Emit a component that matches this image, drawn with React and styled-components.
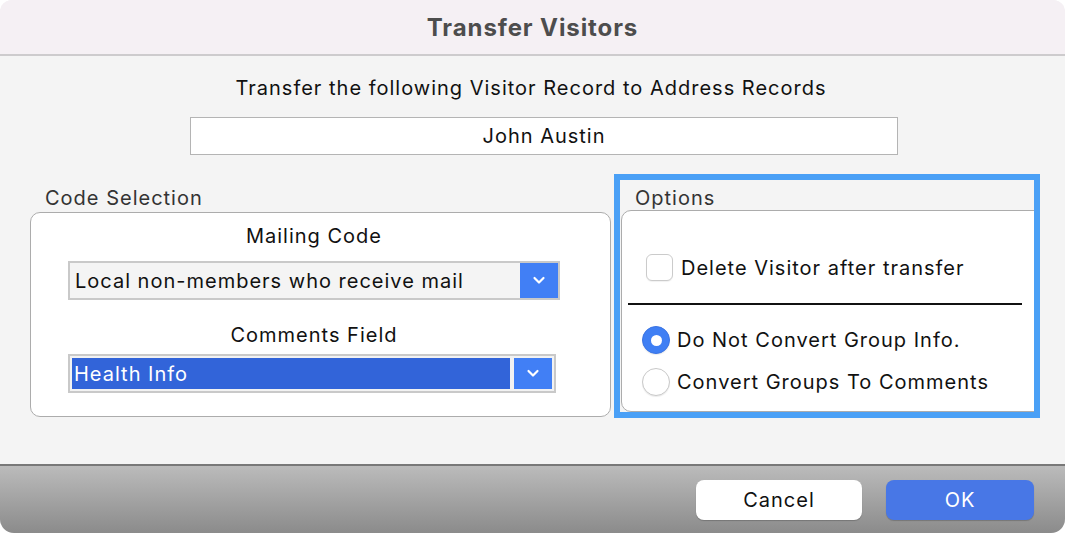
import React from "react";
import styled, { createGlobalStyle } from "styled-components";

const GlobalStyle = createGlobalStyle`
  html, body {
    margin: 0;
    padding: 0;
    background: #ffffff;
  }
  body {
    font-family: "Inter", "Noto Sans", "Liberation Sans", sans-serif;
    color: #111;
    letter-spacing: 1px;
  }
`;

const Chevron = () => (
  <svg width="14" height="9" viewBox="0 0 14 9">
    <path d="M2.5 2 L7 6.5 L11.5 2" fill="none" stroke="#fff" strokeWidth="2.2" strokeLinecap="round" strokeLinejoin="round" />
  </svg>
);

const PopupSelect = ({ value, focused, width }) => (
  <SelectFrame $focused={focused} style={{ width }}>
    <SelectValue $focused={focused}>{value}</SelectValue>
    <SelectButton $focused={focused}>
      <Chevron />
    </SelectButton>
  </SelectFrame>
);

const Radio = ({ checked, label }) => (
  <OptionRow $radio>
    <RadioDot $checked={checked} />
    <OptionText>{label}</OptionText>
  </OptionRow>
);

export default function App() {
  return (
    <>
      <GlobalStyle />
      <Window>
        <TitleBar>
          <Title>Transfer Visitors</Title>
        </TitleBar>

        <Body>
          <Prompt>Transfer the following Visitor Record to Address Records</Prompt>
          <NameField>John Austin</NameField>

          <GroupRow>
            <CodeGroup>
              <GroupLabel>Code Selection</GroupLabel>
              <CodeBox>
                <FieldLabel>Mailing Code</FieldLabel>
                <PopupSelect value="Local non-members who receive mail" width={492} />
                <FieldLabel $spaced>Comments Field</FieldLabel>
                <PopupSelect value="Health Info" focused width={488} />
              </CodeBox>
            </CodeGroup>

            <OptionsRing>
              <GroupLabel>Options</GroupLabel>
              <OptionsBox>
                <OptionRow>
                  <CheckBox />
                  <OptionText>Delete Visitor after transfer</OptionText>
                </OptionRow>
                <Divider />
                <Radios>
                  <Radio checked label="Do Not Convert Group Info." />
                  <Radio label="Convert Groups To Comments" />
                </Radios>
              </OptionsBox>
            </OptionsRing>
          </GroupRow>
        </Body>

        <Footer>
          <Button>Cancel</Button>
          <Button $primary>OK</Button>
        </Footer>
      </Window>
    </>
  );
}

const Window = styled.div`
  width: 1065px;
  height: 533px;
  display: flex;
  flex-direction: column;
  border-radius: 12px 12px 14px 14px;
  overflow: hidden;
  background: #f4f4f4;
`;

const TitleBar = styled.header`
  height: 54px;
  flex: none;
  display: flex;
  align-items: center;
  justify-content: center;
  background: #f5f0f4;
  border-bottom: 2px solid #cdcbcd;
`;

const Title = styled.h1`
  margin: 0;
  font-size: 24px;
  font-weight: 700;
  color: #4d4d4d;
  letter-spacing: 0.9px;
`;

const Body = styled.main`
  flex: 1;
  display: flex;
  flex-direction: column;
  align-items: center;
  padding-top: 20px;
  background: #f4f4f4;
`;

const Prompt = styled.div`
  font-size: 20px;
  line-height: 24px;
  color: #111;
  margin-left: -3px;
`;

const NameField = styled.div`
  margin-top: 17px;
  margin-left: 23px;
  width: 706px;
  height: 36px;
  border: 1px solid #b4b4b4;
  background: #fff;
  display: flex;
  align-items: center;
  justify-content: center;
  font-size: 20px;
  color: #111;
`;

const GroupRow = styled.div`
  align-self: stretch;
  margin-top: 19px;
  padding-left: 30px;
  display: flex;
  align-items: flex-start;
  gap: 3px;
`;

const CodeGroup = styled.section`
  padding-top: 12px;
  display: flex;
  flex-direction: column;
`;

const GroupLabel = styled.div`
  height: 26px;
  line-height: 24px;
  padding-left: 15px;
  font-size: 20px;
  color: #333;
`;

const CodeBox = styled.div`
  width: 492px;
  height: 192px;
  padding: 11px 50px 0 37px;
  border: 1px solid #acacac;
  border-radius: 10px;
  background: #fff;
  display: flex;
  flex-direction: column;
`;

const FieldLabel = styled.div`
  font-size: 20px;
  line-height: 24px;
  text-align: center;
  color: #111;
  margin-top: ${({ $spaced }) => ($spaced ? "23px" : "0")};
  margin-bottom: ${({ $spaced }) => ($spaced ? "7px" : "13px")};
`;

const SelectFrame = styled.div`
  box-sizing: border-box;
  height: 39px;
  border: 2px solid #c9c9c9;
  padding: ${({ $focused }) => ($focused ? "2px" : "0")};
  gap: ${({ $focused }) => ($focused ? "4px" : "0")};
  background: ${({ $focused }) => ($focused ? "#f2f2f2" : "#f4f4f4")};
  display: flex;
  align-items: stretch;
`;

const SelectValue = styled.div`
  flex: 1;
  display: flex;
  align-items: center;
  padding-left: ${({ $focused }) => ($focused ? "2px" : "5px")};
  font-size: 20px;
  color: ${({ $focused }) => ($focused ? "#fff" : "#111")};
  background: ${({ $focused }) => ($focused ? "#3264d9" : "transparent")};
  white-space: nowrap;
`;

const SelectButton = styled.div`
  width: 38px;
  flex: none;
  display: flex;
  align-items: center;
  justify-content: center;
  background: #417ff5;
`;

const OptionsRing = styled.section`
  width: 414px;
  height: 226px;
  border: 6px solid #4aa0f6;
  padding-top: 6px;
  overflow: hidden;
  display: flex;
  flex-direction: column;
`;

const OptionsBox = styled.div`
  margin-left: 1px;
  width: 430px;
  height: 215px;
  border: 1px solid #acacac;
  border-radius: 10px;
  background: #fff;
  padding-top: 43px;
  display: flex;
  flex-direction: column;
`;

const OptionRow = styled.div`
  display: flex;
  align-items: center;
  gap: ${({ $radio }) => ($radio ? "7px" : "8px")};
  padding-left: ${({ $radio }) => ($radio ? "20px" : "24px")};
  height: ${({ $radio }) => ($radio ? "42px" : "27px")};
`;

const OptionText = styled.span`
  font-size: 20px;
  color: #111;
`;

const CheckBox = styled.span`
  width: 25px;
  height: 25px;
  border: 1px solid #cbcbcb;
  border-radius: 6px;
  background: #fff;
  box-shadow: 0 1px 1px rgba(0, 0, 0, 0.06);
`;

const Divider = styled.hr`
  margin: 22px 0 0 6px;
  width: 394px;
  height: 2px;
  border: none;
  background: #111;
`;

const Radios = styled.div`
  margin-top: 14px;
  display: flex;
  flex-direction: column;
`;

const RadioDot = styled.span`
  width: 28px;
  height: 28px;
  box-sizing: border-box;
  border-radius: 50%;
  flex: none;
  display: flex;
  align-items: center;
  justify-content: center;
  border: ${({ $checked }) => ($checked ? "1px solid #3a74e4" : "1px solid #c9c9c9")};
  background: ${({ $checked }) => ($checked ? "#3f7ff4" : "#fff")};
  box-shadow: 0 1px 1px rgba(0, 0, 0, 0.08);
  &::after {
    content: "";
    display: ${({ $checked }) => ($checked ? "block" : "none")};
    width: 11px;
    height: 11px;
    border-radius: 50%;
    background: #fff;
  }
`;

const Footer = styled.footer`
  height: 67px;
  flex: none;
  border-top: 2px solid #787878;
  background: linear-gradient(#bbbbbb, #8b8b8b);
  display: flex;
  align-items: center;
  justify-content: flex-end;
  gap: 24px;
  padding-right: 31px;
`;

const Button = styled.button`
  width: ${({ $primary }) => ($primary ? "148px" : "166px")};
  height: 40px;
  border: none;
  border-radius: 8px;
  font-family: inherit;
  letter-spacing: 1px;
  font-size: 20px;
  color: ${({ $primary }) => ($primary ? "#fff" : "#111")};
  background: ${({ $primary }) => ($primary ? "#4877e6" : "#fff")};
  box-shadow: 0 1px 1px rgba(0, 0, 0, 0.2);
`;
